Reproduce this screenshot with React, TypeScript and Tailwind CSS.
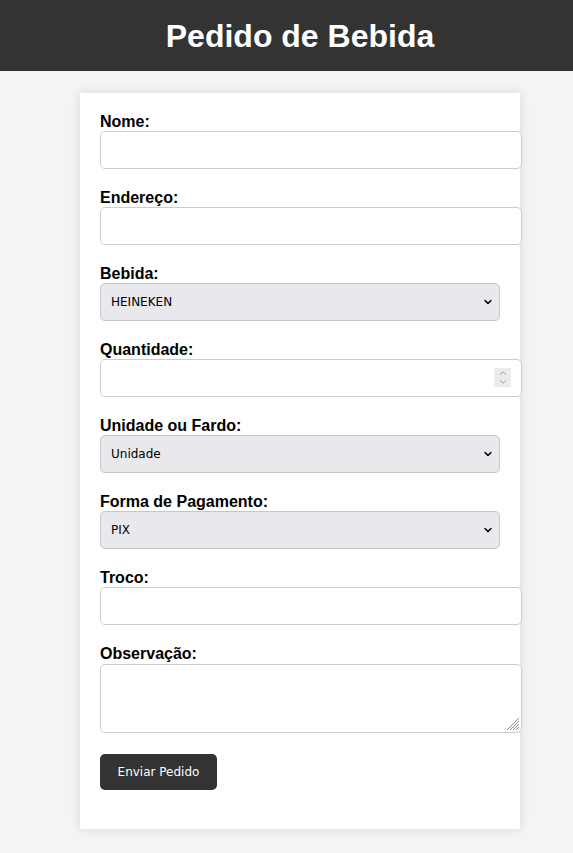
import React from 'react';
import { ChevronDown, ChevronUp } from 'lucide-react';

const BEBIDAS = ['HEINEKEN', 'BUDWEISER', 'SKOL', 'BRAHMA', 'ANTARCTICA'];

const labelCls = 'block text-[16px] leading-[18px] font-bold text-black';
const inputCls = 'block w-[422px] h-[38px] px-[10px] mb-[20px] border border-[#cccccc] rounded-[5px] bg-white text-[13px] outline-none';
const selectCls = 'block w-[400px] h-[38px] pl-[10px] pr-[30px] border border-[#c6c6c6] rounded-[5px] bg-[#e9e9ed] text-[12px] text-black appearance-none outline-none';

function Select({ options }: { options: string[] }) {
  return (
    <div className="relative w-[400px] mb-[20px]">
      <select className={selectCls} style={{ fontFamily: '"DejaVu Sans", Tahoma, sans-serif' }}>
        {options.map(o => (
          <option key={o}>{o}</option>
        ))}
      </select>
      <ChevronDown className="absolute right-[6px] top-[13px] w-[12px] h-[12px] text-black pointer-events-none" strokeWidth={3} />
    </div>
  );
}

export default function App() {
  return (
    <div className="min-h-screen bg-[#f4f4f4] overflow-hidden" style={{ fontFamily: '"Liberation Sans", Arial, sans-serif' }}>
      <div className="w-[600px]">
        {/* cabeçalho */}
        <header className="h-[71px] bg-[#333333] flex items-center justify-center">
          <h1 className="text-[32px] font-bold text-white leading-none">Pedido de Bebida</h1>
        </header>

        {/* formulário */}
        <form className="mt-[22px] mx-auto w-[440px] bg-white px-[20px] pt-[20px] pb-[39px] shadow-[0_0_10px_rgba(0,0,0,0.12)]">
          <label className={labelCls}>Nome:</label>
          <input type="text" className={inputCls} />

          <label className={labelCls}>Endereço:</label>
          <input type="text" className={inputCls} />

          <label className={labelCls}>Bebida:</label>
          <Select options={BEBIDAS} />

          <label className={labelCls}>Quantidade:</label>
          <div className="relative w-[422px] mb-[20px]">
            <input type="text" inputMode="numeric" className="block w-[422px] h-[38px] px-[10px] border border-[#cccccc] rounded-[5px] bg-white text-[13px] outline-none" />
            <div className="absolute right-[11px] top-[9px] w-[17px] h-[19px] bg-[#ececec] flex flex-col items-center justify-center pointer-events-none">
              <ChevronUp className="w-[10px] h-[10px] text-[#777] -mb-[1px]" strokeWidth={1.75} />
              <ChevronDown className="w-[10px] h-[10px] text-[#777]" strokeWidth={1.75} />
            </div>
          </div>

          <label className={labelCls}>Unidade ou Fardo:</label>
          <Select options={['Unidade', 'Fardo']} />

          <label className={labelCls}>Forma de Pagamento:</label>
          <Select options={['PIX', 'Dinheiro', 'Cartão']} />

          <label className={labelCls}>Troco:</label>
          <input type="text" className={inputCls} />

          <label className={labelCls}>Observação:</label>
          <div className="relative w-[422px] mt-[1px]">
            <textarea className="block w-[422px] h-[69px] px-[10px] py-[8px] border border-[#cccccc] rounded-[5px] bg-white text-[13px] outline-none resize-none" />
            {/* alça de redimensionar */}
            <svg className="absolute right-[2px] bottom-[2px] pointer-events-none" width="14" height="14" viewBox="0 0 14 14">
              <g stroke="#8a8a8a" strokeWidth="1">
                <line x1="13" y1="1" x2="1" y2="13" />
                <line x1="13" y1="4" x2="4" y2="13" />
                <line x1="13" y1="7" x2="7" y2="13" />
                <line x1="13" y1="10" x2="10" y2="13" />
              </g>
            </svg>
          </div>

          <button
            type="button"
            className="mt-[21px] h-[36px] w-[117px] rounded-[5px] bg-[#333333] text-white text-[12px]"
            style={{ fontFamily: '"DejaVu Sans", Tahoma, sans-serif' }}
          >
            Enviar Pedido
          </button>
        </form>
      </div>
    </div>
  );
}
